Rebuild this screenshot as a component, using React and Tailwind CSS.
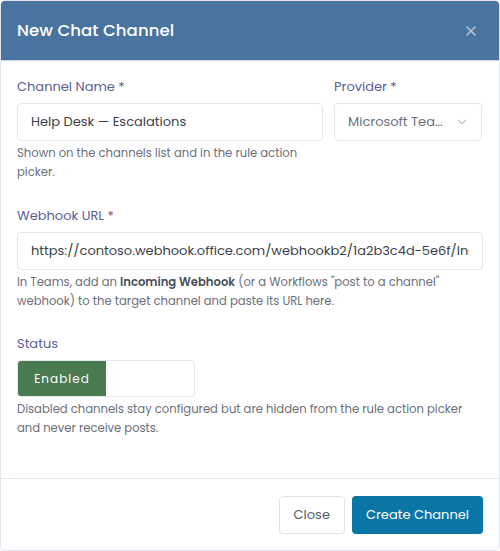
import { X, ChevronDown } from 'lucide-react'

const font = { fontFamily: 'Poppins, Inter, "Noto Sans", sans-serif' }

function Label({ children }) {
  return <div className="text-[13px] text-[#5b6096] mb-[6px] leading-5">{children}</div>
}

function Help({ children }) {
  return <p className="text-[11.6px] leading-[19px] text-[#6b6f7a] mt-[3px]">{children}</p>
}

export default function App() {
  return (
    <div className="w-[500px] h-[551px] bg-white" style={font}>
      <div className="h-full flex flex-col border border-[#e3e5ee] rounded-[5px] overflow-hidden">
        {/* header */}
        <div className="h-[60px] shrink-0 bg-[#4a74a0] border-b border-[#c9d5e4] flex items-center justify-between pl-[16px] pr-[20px] pt-[1px]">
          <h2 className="text-[16.5px] font-medium text-white tracking-[0.1px]">New Chat Channel</h2>
          <X className="w-[16px] h-[16px] text-[#b4c4d6]" strokeWidth={2.5} />
        </div>

        {/* body */}
        <div className="flex-1 pl-[16px] pr-[16px] pt-[16px]">
          <div className="flex gap-[11px]">
            <div className="w-[306px]">
              <Label>Channel Name *</Label>
              <input
                readOnly
                value="Help Desk — Escalations"
                className="w-full h-[38px] border border-[#e4e6ee] rounded-[4px] px-[13px] text-[13px] text-[#3c3f48] outline-none"
              />
              <Help>Shown on the channels list and in the rule action picker.</Help>
            </div>
            <div className="w-[148px]">
              <Label>Provider *</Label>
              <div className="h-[38px] border border-[#e4e6ee] rounded-[4px] flex items-center pl-[13px] pr-[12px] text-[13px] text-[#6b6f7a]">
                <span className="flex-1 truncate">Microsoft Teams</span>
                <ChevronDown className="w-[14px] h-[14px] ml-2 text-[#8a8ea0]" strokeWidth={1.5} />
              </div>
            </div>
          </div>

          <div className="mt-[24px]">
            <Label>Webhook URL *</Label>
            <input
              readOnly
              value="https://contoso.webhook.office.com/webhookb2/1a2b3c4d-5e6f/IncomingWebhook"
              className="w-full h-[38px] border border-[#e4e6ee] rounded-[4px] px-[13px] text-[13px] text-[#3c3f48] outline-none"
            />
            <Help>
              In Teams, add an <b className="font-semibold text-[#4a4e5a]">Incoming Webhook</b> (or a Workflows "post to a channel"
              webhook) to the target channel and paste its URL here.
            </Help>
          </div>

          <div className="mt-[23px]">
            <Label>Status</Label>
            <div className="w-[178px] h-[37px] border border-[#e4e6ee] rounded-[4px] flex overflow-hidden">
              <div className="w-[88px] bg-[#4a7a50] text-white text-[12px] tracking-[1px] flex items-center justify-center">
                Enabled
              </div>
              <div className="flex-1" />
            </div>
            <Help>
              Disabled channels stay configured but are hidden from the rule action picker and never receive posts.
            </Help>
          </div>
        </div>

        {/* footer */}
        <div className="h-[72px] shrink-0 border-t border-[#e4e6ee] flex items-center justify-end gap-[7px] pr-[16px]">
          <button className="h-[38px] px-[14px] border border-[#e1e3ec] rounded-[4px] text-[13px] text-[#555a66]">
            Close
          </button>
          <button className="h-[38px] px-[14px] bg-[#0a76a5] rounded-[4px] text-[13px] text-white">
            Create Channel
          </button>
        </div>
      </div>
    </div>
  )
}
